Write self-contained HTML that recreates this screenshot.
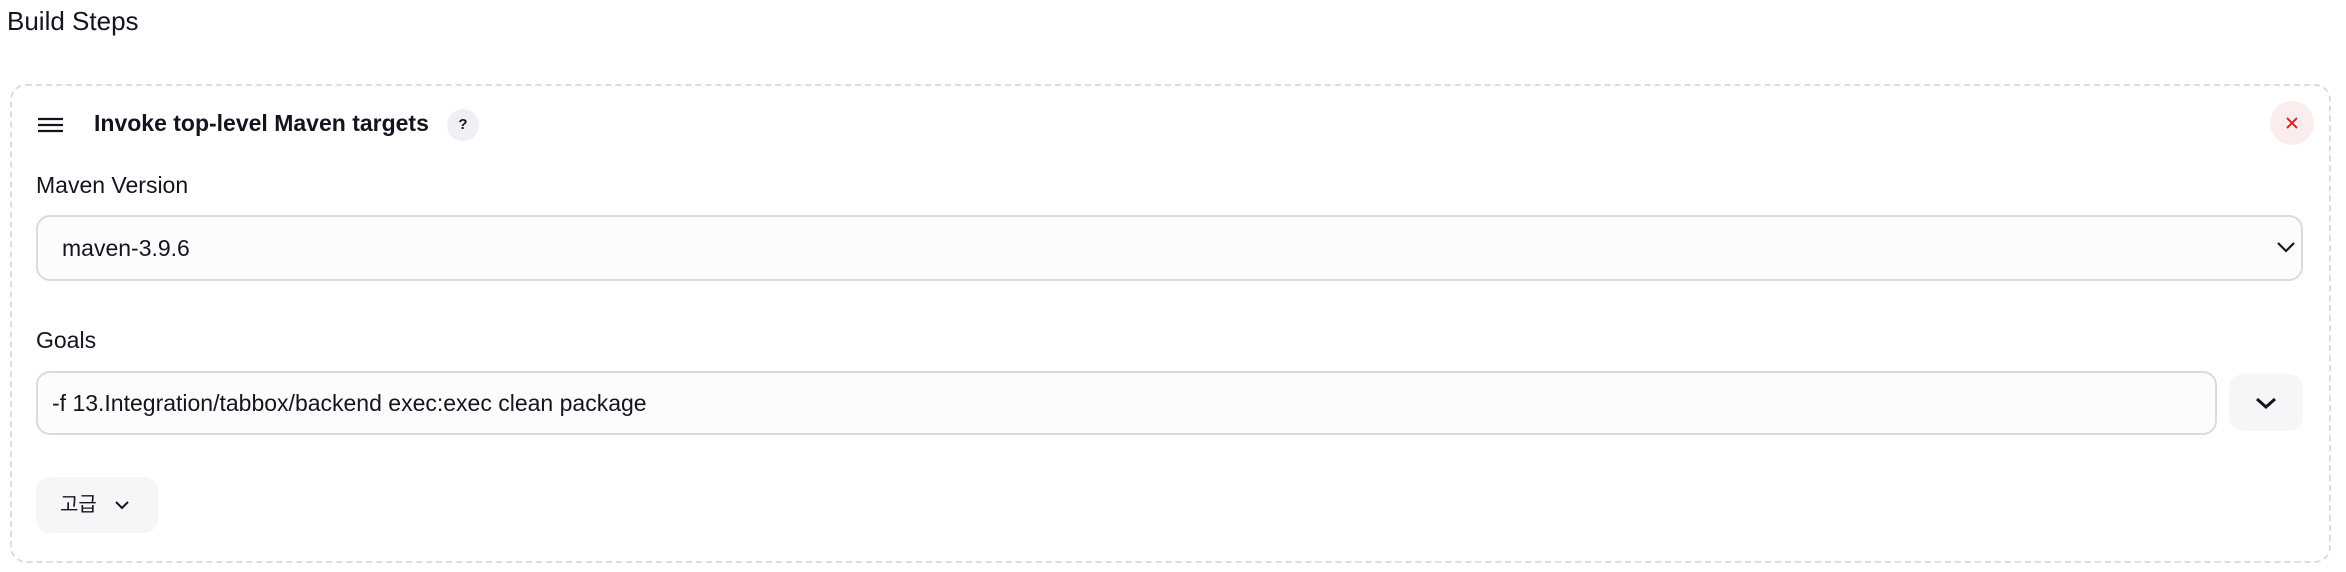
<!DOCTYPE html>
<html><head><meta charset="utf-8"><style>
*{box-sizing:border-box;margin:0;padding:0}
body{width:2346px;height:572px;background:#fff;font-family:"Liberation Sans","Noto Sans CJK KR",sans-serif;color:#14141f;position:relative;overflow:hidden}
.a{position:absolute}
.h1{left:7px;top:6px;font-size:26px}
.box{left:10px;top:84px;width:2321px;height:479px;border:2px dashed #d9dde5;border-radius:16px}
.title{left:94px;top:110px;font-size:23px;font-weight:bold;white-space:nowrap}
.q{left:447px;top:109px;width:32px;height:32px;border-radius:50%;background:#eef0f4;font-size:15px;font-weight:bold;text-align:center;line-height:32px}
.close{left:2270px;top:101px;width:44px;height:44px;border-radius:50%;background:#fbeced}
.lbl{font-size:23px}
.inp{border:2.5px solid #d6dbe4;border-radius:14px;background:#fcfcfd;font-size:23px;padding-left:14px;display:flex;align-items:center;white-space:nowrap}
.btn{background:#f5f6f8;border-radius:14px}
</style></head><body>
<div class="a h1">Build Steps</div>
<div class="a box"></div>
<svg class="a" style="left:37px;top:117px" width="27" height="16"><path d="M1 2H26M1 8H26M1 14H26" stroke="#14141f" stroke-width="2.2"/></svg>
<div class="a title">Invoke top-level Maven targets</div>
<div class="a q">?</div>
<div class="a close"><svg width="44" height="44"><path d="M17 17L27 27M27 17L17 27" stroke="#e0252b" stroke-width="2"/></svg></div>
<div class="a lbl" style="left:36px;top:172px">Maven Version</div>
<div class="a inp" style="left:36px;top:215px;width:2267px;height:66px;padding-left:24px">maven-3.9.6</div>
<svg class="a" style="left:2276px;top:240px" width="20" height="14"><path d="M2 3L10 11L18 3" stroke="#14141f" stroke-width="2.2" fill="none"/></svg>
<div class="a lbl" style="left:36px;top:327px">Goals</div>
<div class="a inp" style="left:36px;top:371px;width:2181px;height:64px">-f 13.Integration/tabbox/backend exec:exec clean package</div>
<div class="a btn" style="left:2229px;top:374px;width:74px;height:57px"><svg width="74" height="57"><path d="M28 25L37 33L46 25" stroke="#14141f" stroke-width="3" fill="none"/></svg></div>
<div class="a btn" style="left:36px;top:477px;width:122px;height:56px;font-size:20px;line-height:56px;padding-left:24px">고급<svg style="position:absolute;left:79px;top:23px" width="14" height="10"><path d="M1 2L7 8L13 2" stroke="#14141f" stroke-width="2" fill="none"/></svg></div>
</body></html>
